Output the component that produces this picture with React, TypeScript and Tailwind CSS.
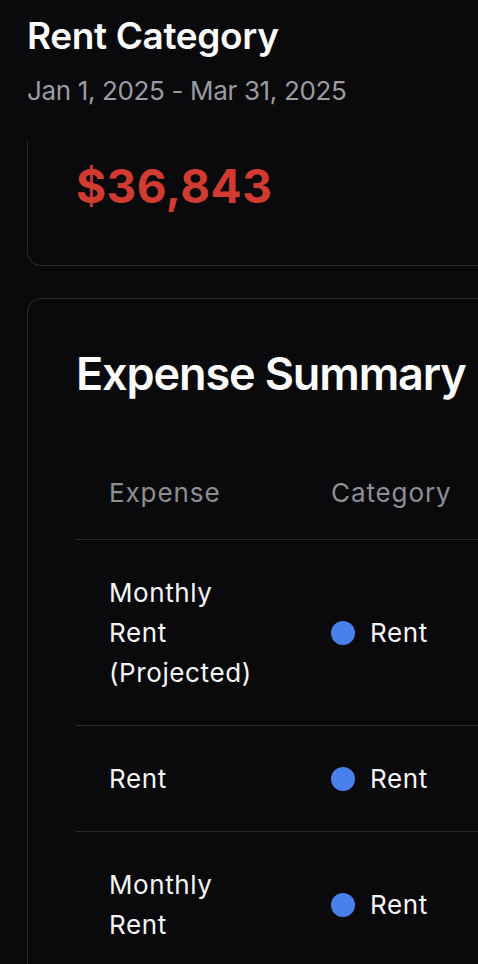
import React from "react";

const rows = [
  { name: "Monthly Rent (Projected)", cat: "Rent" },
  { name: "Rent", cat: "Rent" },
  { name: "Monthly Rent", cat: "Rent" },
];

export default function App() {
  return (
    <div
      className="w-[478px] h-[964px] overflow-hidden bg-[#0a0a0c] text-[#f5f5f7]"
      style={{ fontFamily: "Inter, 'Noto Sans', sans-serif" }}
    >
      <div className="pl-[27px] pt-[14px] h-[141px]">
        <h1 className="text-[37px] leading-[44px] font-semibold tracking-[-0.01em] text-[#fafafa]">
          Rent Category
        </h1>
        <div className="mt-[17px] text-[26px] leading-[32px] tracking-[-0.35px] text-[#9b9ba1]">
          Jan 1, 2025 - Mar 31, 2025
        </div>
      </div>

      <div className="ml-[27px] w-[560px] h-[125px] border border-t-0 border-[#2c2c30] rounded-b-[14px] pl-[48px] pt-[17px]">
        <div className="text-[46px] leading-[56px] font-bold tracking-[0.01em] text-[#d13b31]">$36,843</div>
      </div>

      <div className="ml-[27px] mt-[32px] w-[560px] h-[800px] border border-[#2c2c30] rounded-[14px] pl-[48px] pt-[48px]">
        <h2 className="text-[45px] leading-[54px] font-semibold tracking-[-0.025em] text-[#fafafa]">
          Expense Summary
        </h2>
        <table className="mt-[43px] border-collapse text-left w-[440px]">
          <thead>
            <tr className="border-b border-[#2c2c30]">
              <th className="w-[222px] pl-[33px] pr-[33px] pt-[33px] pb-[30px] text-[26px] leading-[32px] font-normal tracking-[0.9px] text-[#8e8e95]">
                Expense
              </th>
              <th className="pl-[33px] pt-[33px] pb-[30px] text-[26px] leading-[32px] font-normal tracking-[0.9px] text-[#8e8e95]">
                Category
              </th>
            </tr>
          </thead>
          <tbody>
            {rows.map((r, i) => (
              <tr key={i} className="border-b border-[#2c2c30]">
                <td className="w-[222px] pl-[33px] pr-[33px] pt-[33px] pb-[32px] text-[26px] leading-[40px] tracking-[0.6px] align-middle">
                  {r.name}
                </td>
                <td className="pl-[33px] pt-[33px] pb-[32px] text-[26px] leading-[40px] tracking-[0.6px] align-middle">
                  <div className="flex items-center gap-[15px]">
                    <span className="w-[24px] h-[24px] rounded-full bg-[#4a80ec] shrink-0" />
                    <span>{r.cat}</span>
                  </div>
                </td>
              </tr>
            ))}
          </tbody>
        </table>
      </div>
    </div>
  );
}
